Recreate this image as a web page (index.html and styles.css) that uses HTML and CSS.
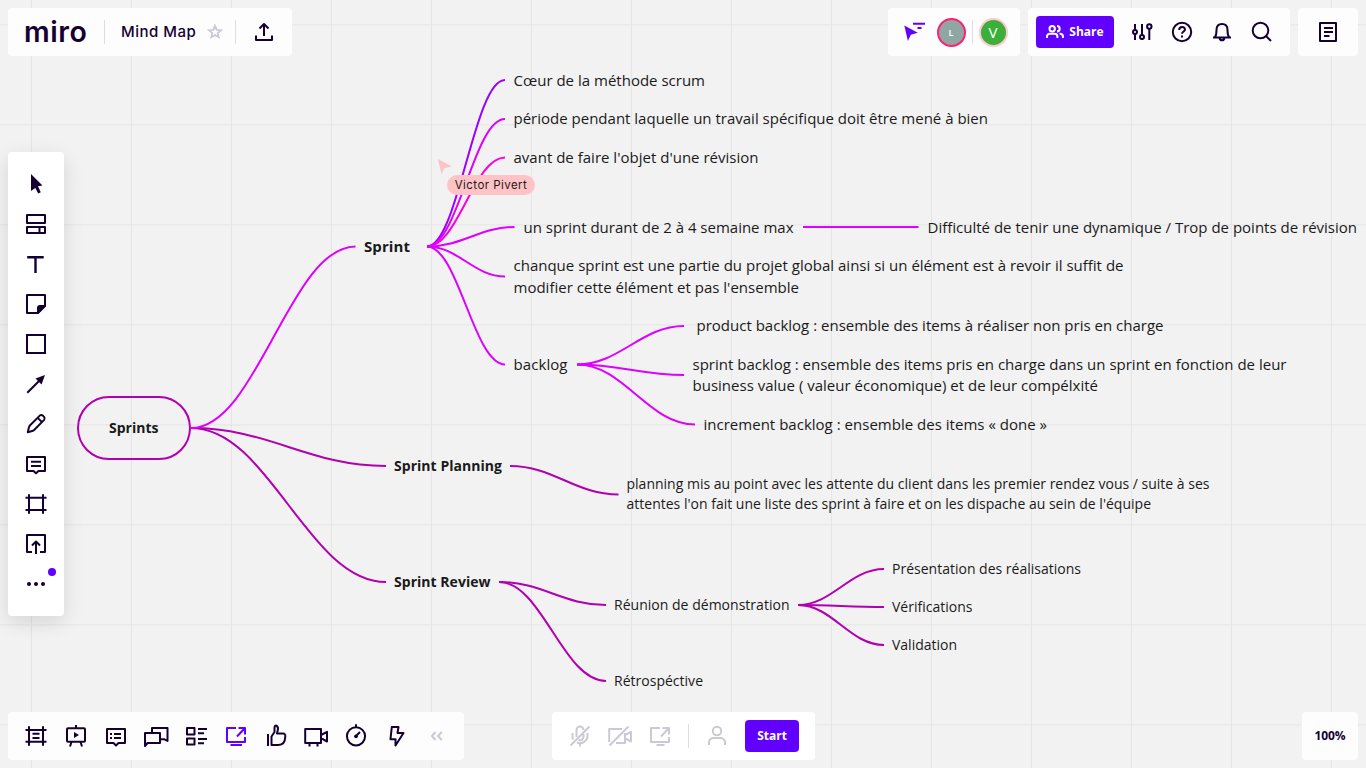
FILE: index.html
```html
<!DOCTYPE html>
<html lang="fr">
<head>
<meta charset="utf-8">
<title>Mind Map</title>
<link rel="stylesheet" href="styles.css">
</head>
<body>
<svg class="board" width="1366" height="768" viewBox="0 0 1366 768">
  <defs>
    <pattern id="grid" x="31" y="24" width="100" height="100" patternUnits="userSpaceOnUse">
      <path class="grid-line" d="M.5 0v100M0 .9h100"/>
    </pattern>
  </defs>
  <rect width="1366" height="768" fill="url(#grid)"/>
  <g class="links plum">
    <rect x="78" y="397" width="112" height="62" rx="31"/>
    <path d="M191 428C269 428 308 466 386 466"/>
    <path d="M191 428C269 428 308 582 386 582"/>
    <path d="M510 466C553.600 466 575 494.500 618.500 494.500"/>
    <path d="M499 582C542 582 563 605 606 605"/>
    <path d="M499 582C542 582 563 681 606 681"/>
    <path d="M798 605C832.400 605 849.600 569 884 569"/>
    <path d="M798 605C832.400 605 849.600 607 884 607"/>
    <path d="M798 605C832.400 605 849.600 645 884 645"/>
  </g>
  <g class="links violet"><path d="M427 246.500C458.200 246.500 473.800 80 505 80"/></g>
  <g class="links pink"><path d="M427 246.500C458.200 246.500 473.800 157.500 505 157.500"/></g>
  <g class="links magenta">
    <path d="M191 428C257 428 290 246.500 355.500 246.500"/>
    <path d="M427 246.500C458.200 246.500 473.800 119 505 119"/>
    <path d="M427 246.500C462 246.500 480 227 514.500 227"/>
    <path d="M427 246.500C458.200 246.500 473.800 276.500 505 276.500"/>
    <path d="M427 246.500C458.200 246.500 473.800 364.500 505 364.500"/>
    <path d="M803 227H918.500"/>
    <path d="M577 364.500C619.800 364.500 641.200 326 684 326"/>
    <path d="M577 364.500C619.800 364.500 641.200 375 684 375"/>
    <path d="M577 364.500C624 364.500 648 424.500 695 424.500"/>
  </g>
  <g class="label strong">
    <text x="109" y="433" textLength="49.500">Sprints</text>
    <text class="large" x="364" y="252" textLength="46">Sprint</text>
    <text x="394" y="471" textLength="108">Sprint Planning</text>
    <text x="394" y="587" textLength="96.500">Sprint Review</text>
  </g>
  <g class="label large">
    <text x="513.500" y="86" textLength="191.500">Cœur de la méthode scrum</text>
    <text x="513.500" y="124" textLength="474.500">période pendant laquelle un travail spécifique doit être mené à bien</text>
    <text x="513.500" y="163" textLength="245">avant de faire l'objet d'une révision</text>
    <text x="523.500" y="233" textLength="270">un sprint durant de 2 à 4 semaine max</text>
    <text x="927.500" y="233" textLength="429.500">Difficulté de tenir une dynamique / Trop de points de révision</text>
    <text x="513.500" y="271" textLength="610">chanque sprint est une partie du projet global ainsi si un élément est à revoir il suffit de</text>
    <text x="513.500" y="293" textLength="285.500">modifier cette élément et pas l'ensemble</text>
    <text x="513.500" y="370" textLength="54">backlog</text>
    <text x="696.500" y="331" textLength="467">product backlog : ensemble des items à réaliser non pris en charge</text>
    <text x="692.500" y="370" textLength="594">sprint backlog : ensemble des items pris en charge dans un sprint en fonction de leur</text>
    <text x="692.500" y="391" textLength="405.500">business value ( valeur économique) et de leur compélxité</text>
    <text x="703.500" y="430" textLength="343.500">increment backlog : ensemble des items « done »</text>
  </g>
  <g class="label">
    <text x="626.500" y="489" textLength="583">planning mis au point avec les attente du client dans les premier rendez vous / suite à ses</text>
    <text x="626.500" y="509" textLength="524.500">attentes l'on fait une liste des sprint à faire et on les dispache au sein de l'équipe</text>
    <text x="614" y="610" textLength="175.500">Réunion de démonstration</text>
    <text x="614" y="686" textLength="89">Rétrospéctive</text>
    <text x="892" y="574" textLength="189">Présentation des réalisations</text>
    <text x="892" y="612" textLength="80.500">Vérifications</text>
    <text x="892" y="650" textLength="65">Validation</text>
  </g>
  <path class="guest-cursor" d="M438 159l14 7.500-7.500 1.500-3 6.500z"/>
</svg>
<div class="guest-name">Victor Pivert</div>

<div class="app">
  <header class="bar">
    <div class="panel title-panel">
      <span class="logo">miro</span>
      <i class="rule"></i>
      <span class="title">Mind Map</span>
      <svg class="star" viewBox="0 0 16 16"><path d="M8 1.800l1.700 4 4.300.4-3.300 2.800 1 4.200L8 11l-3.700 2.200 1-4.200L2 6.200l4.300-.4z"/></svg>
      <i class="rule"></i>
      <svg class="icon export" viewBox="0 0 24 24"><path d="M4 15.500V20h16v-4.500M12 16V4M7.500 8.500L12 4l4.500 4.500"/></svg>
    </div>
    <div class="panel people-panel">
      <svg class="icon follow" viewBox="0 0 24 24"><path class="solid" d="M2.300 5.500l13.500 7.300-7 1.900-2.900 6.300z"/><path d="M11 3.700h12M15.500 8h4"/></svg>
      <span class="avatar guest-l">L</span>
      <i class="rule"></i>
      <span class="avatar guest-v">V</span>
    </div>
    <div class="panel tools-panel">
      <button class="primary share">
        <svg class="people" viewBox="0 0 18 14"><circle cx="6.200" cy="3.700" r="2.700"/><path d="M1 13v-1.500a2.800 2.800 0 0 1 2.800-2.800h4.800a2.800 2.800 0 0 1 2.800 2.800V13M11 1a2.700 2.700 0 1 1 0 5.400M13.500 8.700a3 3 0 0 1 3.500 3V13"/></svg>
        Share
      </button>
      <span class="slot"><svg class="icon" viewBox="0 0 24 24"><path d="M5 4v6M5 14v6M12 4v11M12 19v1M19.300 9v11"/><circle cx="5" cy="12" r="2"/><circle cx="12" cy="17" r="2"/><circle cx="19.300" cy="6.500" r="2.200"/></svg></span>
      <span class="slot"><svg class="icon" viewBox="0 0 24 24"><circle cx="12" cy="12" r="9.200"/><path d="M9.200 10c0-4 5.800-3.800 5.800-.5 0 2-3 2-3 4.300M12 15.500v2"/></svg></span>
      <span class="slot"><svg class="icon" viewBox="0 0 24 24"><path d="M3 17.500h18M5 17c1.500-2 1.500-4 1.500-7 0-4 2-6 5.500-6s5.500 2 5.500 6c0 3 0 5 1.500 7M9.500 18c.5 3 4.500 3 5 0"/></svg></span>
      <span class="slot"><svg class="icon" viewBox="0 0 24 24"><circle cx="10.500" cy="10.500" r="7.800"/><path d="M16 16l5 5"/></svg></span>
    </div>
    <div class="panel notes-panel"><svg class="icon" viewBox="0 0 24 24"><path d="M4 3h16v18H4zM8 8h9M8 12h9M8 16h5.500"/></svg></div>
  </header>

  <nav class="panel toolbar">
    <span class="tool"><svg class="icon" viewBox="0 0 24 24"><path class="solid" d="M7 2l11.500 11.500-4.500.8 2.800 6-2.600 1.200L11.300 16 7 19z"/></svg></span>
    <span class="tool"><svg class="icon" viewBox="0 0 24 24"><path d="M3 3h18v8H3zM3 15h18v6H3zM15.500 15v6"/></svg></span>
    <span class="tool"><svg class="icon" viewBox="0 0 24 24"><path class="heavy" d="M3.200 5.200h16.500M11.500 5v16"/></svg></span>
    <span class="tool"><svg class="icon" viewBox="0 0 24 24"><path d="M3 3h18v11l-7 7H3z"/><path class="solid" d="M13 21.500V16a3 3 0 0 1 3-3h5.500v1.500l-7 7z"/></svg></span>
    <span class="tool"><svg class="icon" viewBox="0 0 24 24"><path class="miter" d="M3 3h18v18H3z"/></svg></span>
    <span class="tool"><svg class="icon" viewBox="0 0 24 24"><path d="M3.300 20.700L16 8"/><path class="solid" d="M21 3l-3.500 9.500L11.500 6.500z"/></svg></span>
    <span class="tool"><svg class="icon" viewBox="0 0 24 24"><path d="M3.800 20.200l1.100-4.800q.3-1.200 1.200-2.100L15.800 3.600q1.500-1.300 3 0l1.300 1.300q1.300 1.500 0 3L10.400 17.700q-1 1-2.200 1.300zM13.700 5.900l4.200 4.200"/></svg></span>
    <span class="tool"><svg class="icon" viewBox="0 0 24 24"><path d="M3 5h18v14h-6.500L12 21.300 9.500 19H3zM7 9.700h10M7 14h10"/></svg></span>
    <span class="tool"><svg class="icon" viewBox="0 0 24 24"><path d="M1.500 5.800h21M1.500 18h21M5 2.200v19.600M19 2.200v19.600"/></svg></span>
    <span class="tool"><svg class="icon" viewBox="0 0 24 24"><path d="M8 20H3V3h18v17h-5M12 22V10M8 13.500l4-4 4 4"/></svg></span>
    <span class="tool more"><svg class="icon" viewBox="0 0 24 24"><g class="dots"><circle cx="5" cy="12" r="2"/><circle cx="12" cy="12" r="2"/><circle cx="19" cy="12" r="2"/></g></svg></span>
  </nav>

  <footer class="bar bottom">
    <div class="panel activity">
      <span class="slot"><svg class="icon" viewBox="0 0 24 24"><path d="M1.500 6h21M1.500 17.800h21M5 2.200v19.600M19 2.200v19.600M8.500 9.800h7M8.500 14h7"/></svg></span>
      <span class="slot"><svg class="icon" viewBox="0 0 24 24"><rect x="3" y="4.200" width="18" height="13.500" rx="1"/><path d="M12 1v3M7.500 18L6 22.500M16.500 18l1.500 4.500"/><path class="solid" d="M10 8l5 3-5 3z"/></svg></span>
      <span class="slot"><svg class="icon" viewBox="0 0 24 24"><path d="M3 5h18v14h-6.500L12 21.500 9.500 19H3zM6 10h2M6 14h2M10 10h7M10 14h7"/></svg></span>
      <span class="slot"><svg class="icon" viewBox="0 0 24 24"><path d="M1 22V9h15v10H3.500zM8 8.500V4h15.500v13l-3-1.700H17"/></svg></span>
      <span class="slot"><svg class="icon" viewBox="0 0 24 24"><path d="M3 4h7.500v6.500H3zM3 14.500h7.500V20.500H3zM14 5h9M14 9.200h6M14 15h9M14 19.200h6"/></svg></span>
      <span class="slot active"><svg class="icon" viewBox="0 0 24 24"><path d="M12 4H3v14h18v-5M13 12.500L21 4M14.500 4H21v6.500M6.500 21h11.500"/></svg></span>
      <span class="slot"><svg class="icon" viewBox="0 0 24 24"><path d="M4 10v12M7.500 21V12.500L10.500 8V4q0-2.500 1.500-2.500 2.200.8 2 3.500l-1 4.500H19q2.500 0 2.300 3Q21 21 14.500 21z"/></svg></span>
      <span class="slot"><svg class="icon" viewBox="0 0 24 24"><path d="M1.200 5H17v14H1.200zM17 11l6-3.200v9.700l-6-3.300M5.500 19v3.500M13.500 19v3.500"/></svg></span>
      <span class="slot"><svg class="icon" viewBox="0 0 24 24"><circle cx="12" cy="12.300" r="9.100"/><path d="M12 .2v3M12 12l4-4"/><circle class="solid" cx="12" cy="12.300" r="1.900"/></svg></span>
      <span class="slot"><svg class="icon" viewBox="0 0 24 24"><path d="M7.800 3H14.500l-1 6H19.500L11.500 21.500V15.200H6.500z"/></svg></span>
      <span class="slot muted"><svg class="icon" viewBox="0 0 24 24"><path d="M11.500 8L7.800 12l3.700 4M17.800 8L14 12l3.800 4"/></svg></span>
    </div>
    <div class="panel call">
      <span class="slot muted"><svg class="icon" viewBox="0 0 24 24"><path d="M2.500 21.500l19-19M8.500 13V6a3.500 3.500 0 0 1 7 0M15.500 10v3a3.500 3.500 0 0 1-5 3M4.500 9v3.500q0 1.500.8 3M19.500 9v3.500a7.500 7.500 0 0 1-10.500 6M12 20v2.500"/></svg></span>
      <span class="slot muted"><svg class="icon" viewBox="0 0 24 24"><path d="M1.500 21.500l19-19M14 5H1.200v13M8 19h9V9M17 11l6-3.200v9.700l-6-3.300"/></svg></span>
      <span class="slot muted"><svg class="icon" viewBox="0 0 24 24"><path d="M12 4H3v14h18v-5M13 12.500L21 4M14.500 4H21v6.500M8.500 21h8"/></svg></span>
      <i class="rule"></i>
      <span class="slot muted person"><svg class="icon" viewBox="0 0 24 24"><circle cx="12" cy="7" r="4.200"/><path d="M4 21v-2.500a4.500 4.500 0 0 1 4.500-4.500h7a4.500 4.500 0 0 1 4.500 4.500V21"/></svg></span>
      <button class="primary start">Start</button>
    </div>
    <div class="panel zoom">100%</div>
  </footer>
</div>
</body>
</html>
```

FILE: styles.css
```css
* { box-sizing: border-box; }
body {
  margin: 0;
  width: 1366px;
  height: 768px;
  overflow: hidden;
  position: relative;
  background: #f2f2f2;
  color: #140032;
  font-family: "Open Sans", "Noto Sans", sans-serif;
}

/* board */
.board { position: absolute; top: 0; left: 0; }
.grid-line { stroke: #e5e5e5; stroke-width: 1; fill: none; }
.links { fill: none; stroke-width: 2; }
.plum { stroke: #b000b0; }
.magenta { stroke: #dd00ff; }
.violet { stroke: #9900ff; }
.pink { stroke: #ff00dd; }
.label { font-size: 14px; fill: #1a1a1a; }
.large { font-size: 15px; }
.strong { font-weight: 700; }
.guest-cursor { fill: #ffc3c6; }
.guest-name {
  position: absolute;
  left: 447px;
  top: 175px;
  width: 88px;
  height: 20px;
  border-radius: 10px;
  background: #ffc3c6;
  color: #1a1a1a;
  font: 400 11.5px/21px Inter, sans-serif;
  letter-spacing: .45px;
  text-align: center;
  white-space: nowrap;
}

/* shell */
.app {
  position: relative;
  height: 768px;
  padding: 8px;
  display: flex;
  flex-direction: column;
  align-items: stretch;
}
.bar { display: flex; height: 48px; gap: 8px; }
.bottom { margin-top: auto; }
.panel {
  display: flex;
  align-items: center;
  background: #fdfdfd;
  border-radius: 4px;
}
.rule { width: 1px; height: 24px; background: #dcdce2; flex: none; }
.slot {
  width: 40px;
  height: 40px;
  display: flex;
  align-items: center;
  justify-content: center;
  flex: none;
}
.icon {
  width: 24px;
  height: 24px;
  flex: none;
  overflow: visible;
  fill: none;
  stroke: currentColor;
  stroke-width: 2;
  stroke-linejoin: round;
}
.icon .solid, .icon .dots { fill: currentColor; stroke: none; }
.icon .heavy { stroke-width: 2.4; }
.icon .miter { stroke-linejoin: miter; }
.active { color: #6200ff; }
.muted { color: #cbc9d6; }
.primary {
  border: 0;
  border-radius: 4px;
  background: #6200ff;
  color: #fff;
  height: 32px;
  padding: 0;
  font: 700 12px/32px "Open Sans", "Noto Sans", sans-serif;
}

/* header */
.title-panel { width: 284px; padding-left: 16px; }
.logo {
  width: 80px;
  font: 600 28.5px/38px Inter, sans-serif;
  letter-spacing: .6px;
  padding-bottom: 1px;
}
.title {
  margin-left: 16px;
  width: 86px;
  font: 500 15px/24px Inter, sans-serif;
  letter-spacing: .5px;
  white-space: nowrap;
}
.star { width: 16px; height: 16px; margin-right: 12px; fill: none; stroke: #cbc9d6; stroke-width: 1.8; }
.export { margin-left: 16px; }
.people-panel { width: 132px; margin-left: auto; padding-left: 14px; }
.follow { color: #6200ff; }
.avatar {
  width: 29px;
  height: 29px;
  border-radius: 50%;
  border: 2px solid;
  color: #fff;
  display: flex;
  align-items: center;
  justify-content: center;
  flex: none;
  line-height: 1;
}
.guest-l { margin: 0 6.5px 0 10.5px; background: #8fa6a3; border-color: #ff2070; font-size: 9px; font-weight: 600; }
.guest-v { margin-left: 5.5px; background: #3aaf3a; border-color: #ffc8cc; font-size: 15px; }
.tools-panel { width: 262px; padding-left: 8px; }
.share {
  width: 78px;
  margin-right: 8px;
  display: flex;
  align-items: center;
  justify-content: center;
  gap: 5px;
}
.people { width: 18px; height: 14px; fill: none; stroke: #fff; stroke-width: 2; }
.notes-panel { width: 60px; justify-content: center; }

/* left toolbar */
.toolbar {
  width: 56px;
  height: 464px;
  margin-top: 96px;
  padding: 12px 8px;
  flex-direction: column;
  background: #fff;
  box-shadow: 0 6px 20px rgba(0, 0, 0, .12);
}
.tool { width: 40px; height: 40px; display: flex; align-items: center; justify-content: center; flex: none; }
.more { position: relative; }
.more::after {
  content: "";
  position: absolute;
  right: 0;
  top: 4px;
  width: 8px;
  height: 8px;
  border-radius: 50%;
  background: #6200ff;
}

/* footer */
.activity { width: 456px; padding-left: 8px; }
.call { width: 263px; margin-left: 80px; padding-left: 8px; background: #fff; }
.call .rule { margin: 0 8px; }
.start { width: 54px; margin-left: 8px; }
.zoom {
  width: 56px;
  margin-left: auto;
  padding-bottom: 2px;
  justify-content: center;
  font-size: 12px;
  font-weight: 700;
  letter-spacing: -.1px;
}
```
